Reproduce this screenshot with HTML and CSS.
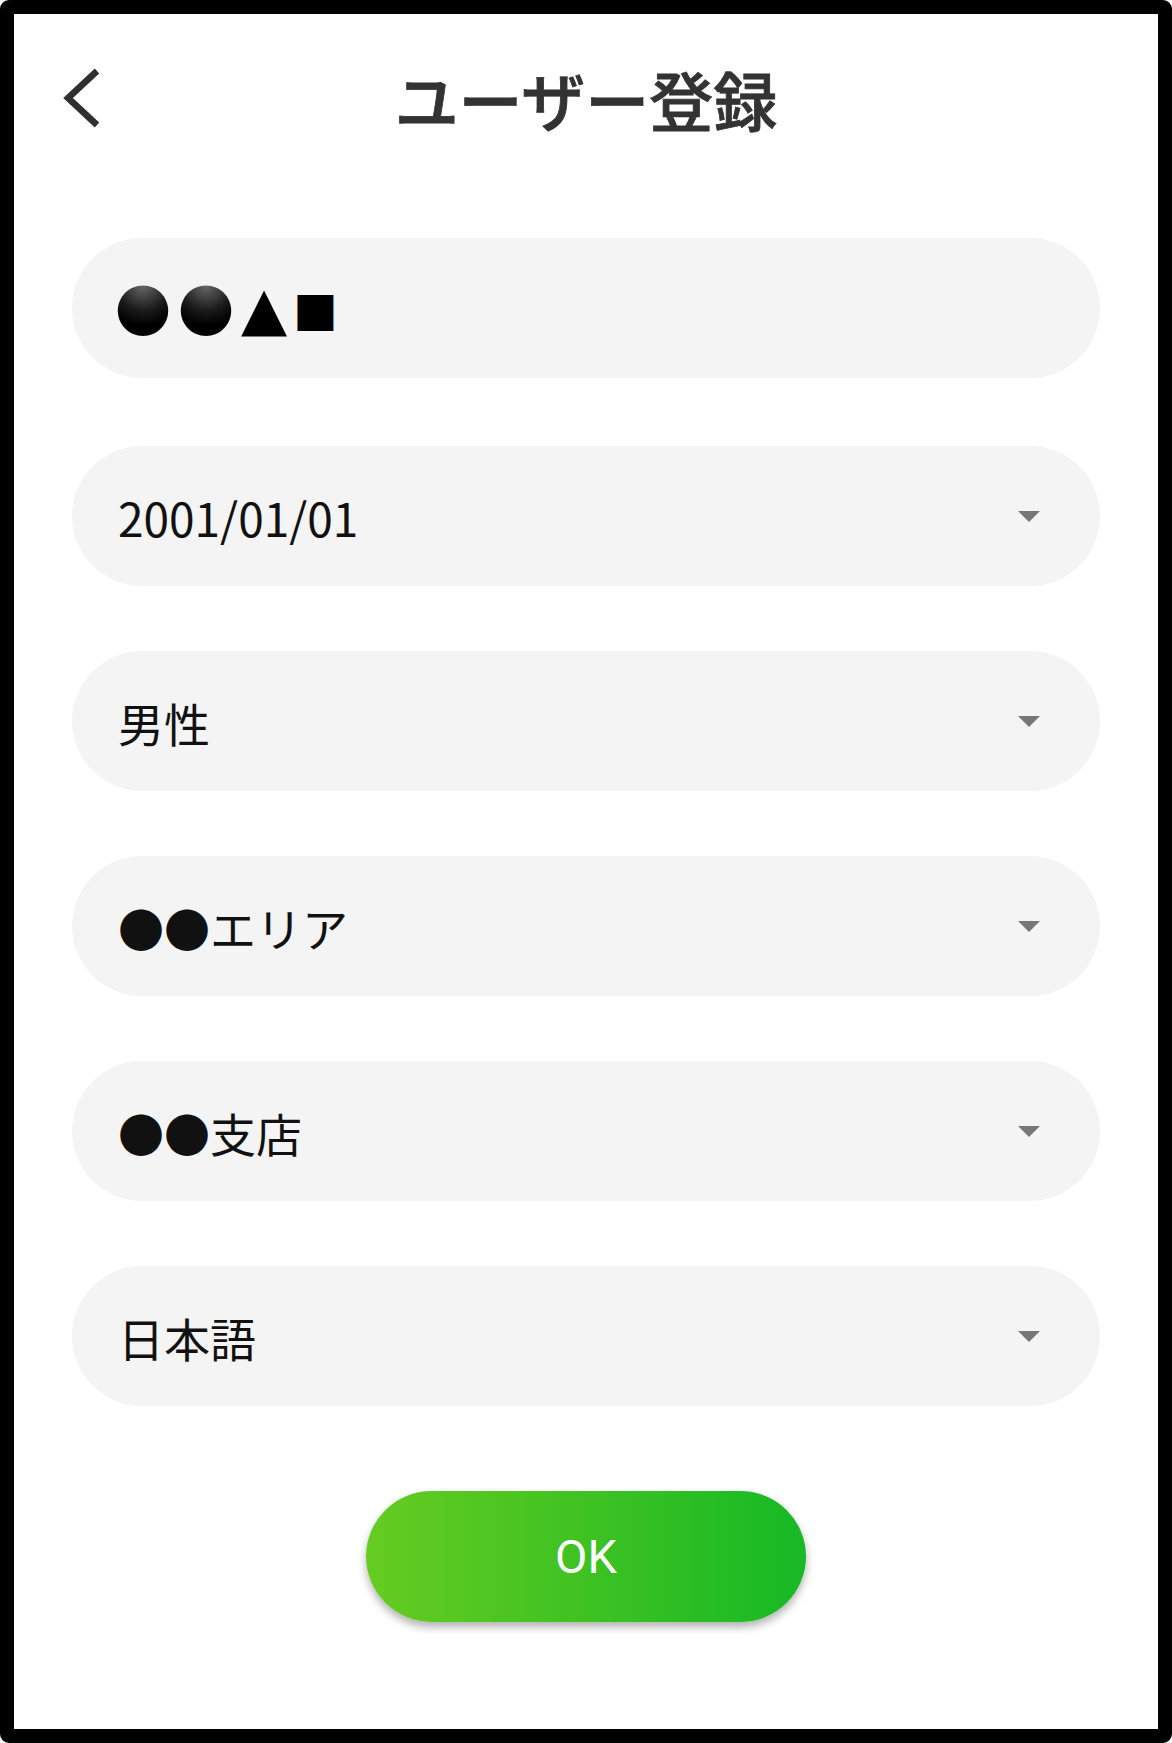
FILE: index.html
```html
<!DOCTYPE html>
<html lang="ja">
<head>
<meta charset="utf-8">
<title>ユーザー登録</title>
<link rel="stylesheet" href="styles.css">
</head>
<body>
<div class="frame">
  <header class="topbar">
    <a class="back" href="#" aria-label="戻る">
      <svg width="42" height="62" viewBox="0 0 42 62"><polyline points="36,4 7,31 36,58" fill="none" stroke="#2f2f2f" stroke-width="6.5"/></svg>
    </a>
    <h1 class="title">ユーザー登録</h1>
    <span></span>
  </header>

  <form class="form">
    <div class="field first">
      <span class="value name"><span class="orb">●</span><span class="orb">●</span><span class="tri">▲</span><span class="sq">■</span></span>
    </div>
    <div class="field select">
      <span class="value">2001/01/01</span><span class="caret"></span>
    </div>
    <div class="field select">
      <span class="value">男性</span><span class="caret"></span>
    </div>
    <div class="field select">
      <span class="value">●●エリア</span><span class="caret"></span>
    </div>
    <div class="field select">
      <span class="value">●●支店</span><span class="caret"></span>
    </div>
    <div class="field select">
      <span class="value">日本語</span><span class="caret"></span>
    </div>
    <button type="button" class="ok">OK</button>
  </form>
</div>
</body>
</html>
```

FILE: styles.css
```css
html, body {
  margin: 0;
  padding: 0;
  background: #fff;
}

.frame {
  box-sizing: border-box;
  width: 1172px;
  height: 1743px;
  border: 14px solid #000;
  border-radius: 9px;
  background: #fff;
  font-family: "Noto Sans CJK JP", "Noto Sans", sans-serif;
}

/* header: back chevron + centered title */
.topbar {
  display: grid;
  grid-template-columns: 1fr auto 1fr;
  align-items: center;
  height: 80px;
  padding: 44px 47px 0;
}

.back {
  display: flex;
  align-items: center;
}

.title {
  margin: 0;
  font-size: 64px;
  font-weight: 500;
  color: #333;
  -webkit-text-stroke: 0.8px #333;
  line-height: 80px;
}

/* form fields */
.form {
  display: flex;
  flex-direction: column;
  gap: 65px;
  padding: 100px 58px 0;
}

.field {
  display: flex;
  align-items: center;
  justify-content: space-between;
  box-sizing: border-box;
  height: 140px;
  padding: 0 60px 0 46px;
  border-radius: 70px;
  background: #f4f4f4;
}

.field.first {
  margin-bottom: 3px;
}

.value {
  font-size: 46px;
  color: #111;
  line-height: 1;
  padding-top: 2px;
}

.name {
  display: flex;
  align-items: center;
  padding-top: 0;
  margin-left: -3px;
}

.orb {
  font-size: 56px;
  line-height: 1;
  margin-right: 7px;
  background: radial-gradient(circle at 50% 8%, #6a6a6a 0%, #1a1a1a 45%, #000 70%);
  -webkit-background-clip: text;
  background-clip: text;
  color: transparent;
}

.tri {
  font-family: "DejaVu Sans", sans-serif;
  font-size: 60px;
  line-height: 1;
  color: #000;
  margin-right: 6px;
}

.sq {
  font-family: "DejaVu Sans", sans-serif;
  font-size: 47px;
  line-height: 1;
  color: #000;
}

.caret {
  width: 0;
  height: 0;
  border-left: 11px solid transparent;
  border-right: 11px solid transparent;
  border-top: 11px solid #777;
}

.ok {
  align-self: center;
  width: 440px;
  height: 131px;
  margin-top: 20px;
  border: none;
  border-radius: 66px;
  background: linear-gradient(90deg, #66cc22 0%, #3ec222 50%, #16b925 100%);
  box-shadow: 0 5px 9px rgba(0, 0, 0, 0.3);
  color: #fff;
  font-family: Roboto, "Noto Sans", sans-serif;
  font-size: 47px;
  padding: 0;
}
```
